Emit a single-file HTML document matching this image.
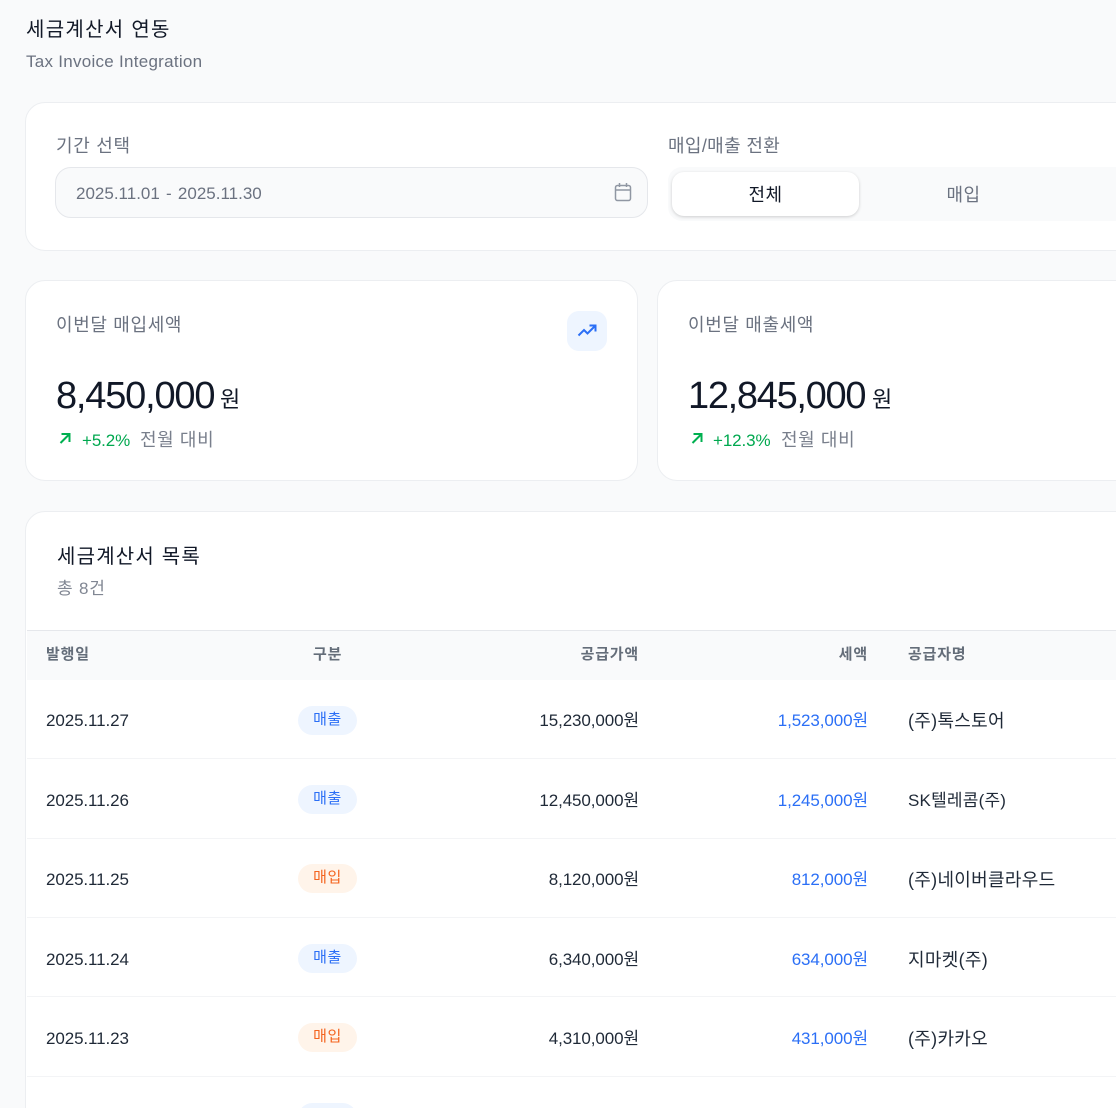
<!DOCTYPE html>
<html lang="ko"><head><meta charset="utf-8"><title>세금계산서 연동</title>
<style>
html,body{margin:0;padding:0;width:1116px;height:1108px;overflow:hidden;background:#f9fafb}
body{position:relative;font-family:"Liberation Sans","Noto Sans CJK KR",sans-serif;font-weight:400}
.t{position:absolute;white-space:nowrap;line-height:24px;height:24px}
.r{text-align:right}
.card{position:absolute;background:#fff;border:1px solid #eceef1;box-sizing:border-box;border-radius:20px}
.g{color:#6b7280}.d{color:#1f2937}.b{color:#2b6ff6}
.line{position:absolute;left:27px;width:1089px;height:1px;background:#f3f4f6}
.pill{position:absolute;left:298px;width:59px;height:29px;border-radius:15px;text-align:center;font-size:15px;letter-spacing:.6px;line-height:28px}
.pb{background:#eef5ff;color:#2b6ff6}.po{background:#fff4ea;color:#f4631e}
.h{font-size:15px;color:#4b5563;font-weight:700;letter-spacing:.8px;opacity:.85}
.n{font-size:17px;letter-spacing:-.1px}
.v{font-size:18px;letter-spacing:.3px}
svg{position:absolute;fill:none}
</style></head><body>
<div class="t" style="left:26px;top:18px;font-size:20px;color:#111827;letter-spacing:1.3px">세금계산서 연동</div>
<div class="t g" style="left:26px;top:50px;font-size:17px;letter-spacing:.27px">Tax Invoice Integration</div>

<div class="card" style="left:25px;top:102px;width:1200px;height:149px"></div>
<div class="t g" style="left:56px;top:134px;font-size:18px;letter-spacing:.7px">기간 선택</div>
<div style="position:absolute;left:55px;top:167px;width:593px;height:51px;box-sizing:border-box;background:#f9fafb;border:1px solid #e5e7eb;border-radius:16px"></div>
<div class="t g" style="left:76px;top:182px;font-size:17px;letter-spacing:0;word-spacing:1.500px">2025.11.01 - 2025.11.30</div>
<svg style="left:613px;top:182px" width="20" height="20" viewBox="0 0 20 20" stroke="#9097a3" stroke-width="1.5"><rect x="2.500" y="3.500" width="15" height="15" rx="2"/><path d="M2.500 8H17.500M6.500 1V5M13.500 1V5"/></svg>

<div class="t g" style="left:668px;top:134px;font-size:18px;letter-spacing:.35px">매입/매출 전환</div>
<div style="position:absolute;left:668px;top:167px;width:460px;height:54px;background:#f9fafb;border-radius:14px 0 0 14px"></div>
<div style="position:absolute;left:672px;top:172px;width:187px;height:44px;background:#fff;border-radius:12px;box-shadow:0 1px 3px rgba(0,0,0,.18)"></div>
<div class="t" style="left:672px;top:183px;width:187px;text-align:center;font-size:18px;color:#111827;letter-spacing:.5px">전체</div>
<div class="t g" style="left:870px;top:183px;width:187px;text-align:center;font-size:18px;letter-spacing:.5px">매입</div>

<div class="card" style="left:25px;top:280px;width:613px;height:201px"></div>
<div class="t g" style="left:56px;top:313px;font-size:18px;letter-spacing:.65px">이번달 매입세액</div>
<div style="position:absolute;left:567px;top:311px;width:40px;height:40px;background:#eef5ff;border-radius:12px"></div>
<svg style="left:577px;top:321px" width="20" height="20" viewBox="0 0 20 20" stroke="#2b6ff6" stroke-width="2"><path d="M1.500 14.500L7 9L10.500 12.500L18 5M12.500 4.500H18.500V10.500"/></svg>
<div class="t" style="left:56px;top:373px;height:46px;line-height:46px;font-size:38px;color:#111827;letter-spacing:-1.200px">8,450,000</div>
<div class="t" style="left:220px;top:388px;font-size:22px;color:#111827">원</div>
<svg style="left:57px;top:431px" width="16" height="16" viewBox="0 0 16 16" stroke="#00b050" stroke-width="2"><path d="M3.500 12L12.500 3M4.500 3H12.500V11"/></svg>
<div class="t" style="left:82px;top:429px;font-size:17px;letter-spacing:-.1px;color:#00a84f">+5.2%</div>
<div class="t g" style="left:140px;top:428px;font-size:18px;letter-spacing:.6px;opacity:.9">전월 대비</div>

<div class="card" style="left:657px;top:280px;width:613px;height:201px"></div>
<div class="t g" style="left:688px;top:313px;font-size:18px;letter-spacing:.65px">이번달 매출세액</div>
<div class="t" style="left:688px;top:373px;height:46px;line-height:46px;font-size:38px;color:#111827;letter-spacing:-1.300px">12,845,000</div>
<div class="t" style="left:872px;top:388px;font-size:22px;color:#111827">원</div>
<svg style="left:689px;top:431px" width="16" height="16" viewBox="0 0 16 16" stroke="#00b050" stroke-width="2"><path d="M3.500 12L12.500 3M4.500 3H12.500V11"/></svg>
<div class="t" style="left:713px;top:429px;font-size:17px;letter-spacing:-.1px;color:#00a84f">+12.3%</div>
<div class="t g" style="left:781px;top:428px;font-size:18px;letter-spacing:.6px;opacity:.9">전월 대비</div>

<div class="card" style="left:25px;top:511px;width:1300px;height:800px"></div>
<div class="t" style="left:57px;top:545px;font-size:20px;color:#111827;letter-spacing:1.200px">세금계산서 목록</div>
<div class="t g" style="left:57px;top:577px;font-size:17px;opacity:.85;letter-spacing:.8px">총 8건</div>

<div style="position:absolute;left:27px;top:630px;width:1089px;height:50px;background:#f9fafb;border-top:1px solid #e5e7eb;box-sizing:border-box"></div>
<div class="t h" style="left:46px;top:643px">발행일</div>
<div class="t h" style="left:313px;top:643px">구분</div>
<div class="t h r" style="right:477px;top:643px">공급가액</div>
<div class="t h r" style="right:248px;top:643px">세액</div>
<div class="t h" style="left:908px;top:643px">공급자명</div>

<div class="line" style="top:758px"></div>
<div class="line" style="top:838px"></div>
<div class="line" style="top:917px"></div>
<div class="line" style="top:996px"></div>
<div class="line" style="top:1076px"></div>

<div class="t n d" style="left:46px;top:709px">2025.11.27</div>
<div class="pill pb" style="top:706px">매출</div>
<div class="t n d r" style="right:477px;top:709px">15,230,000원</div>
<div class="t n b r" style="right:248px;top:709px">1,523,000원</div>
<div class="t v d" style="left:908px;top:709px">(주)톡스토어</div>

<div class="t n d" style="left:46px;top:789px">2025.11.26</div>
<div class="pill pb" style="top:785px">매출</div>
<div class="t n d r" style="right:477px;top:789px">12,450,000원</div>
<div class="t n b r" style="right:248px;top:789px">1,245,000원</div>
<div class="t d" style="left:908px;top:789px;font-size:17px;letter-spacing:.2px">SK텔레콤(주)</div>

<div class="t n d" style="left:46px;top:868px">2025.11.25</div>
<div class="pill po" style="top:864px">매입</div>
<div class="t n d r" style="right:477px;top:868px">8,120,000원</div>
<div class="t n b r" style="right:248px;top:868px">812,000원</div>
<div class="t v d" style="left:908px;top:868px">(주)네이버클라우드</div>

<div class="t n d" style="left:46px;top:948px">2025.11.24</div>
<div class="pill pb" style="top:944px">매출</div>
<div class="t n d r" style="right:477px;top:948px">6,340,000원</div>
<div class="t n b r" style="right:248px;top:948px">634,000원</div>
<div class="t v d" style="left:908px;top:948px">지마켓(주)</div>

<div class="t n d" style="left:46px;top:1027px">2025.11.23</div>
<div class="pill po" style="top:1023px">매입</div>
<div class="t n d r" style="right:477px;top:1027px">4,310,000원</div>
<div class="t n b r" style="right:248px;top:1027px">431,000원</div>
<div class="t v d" style="left:908px;top:1027px">(주)카카오</div>

<div class="pill pb" style="top:1103px"></div>
</body></html>
